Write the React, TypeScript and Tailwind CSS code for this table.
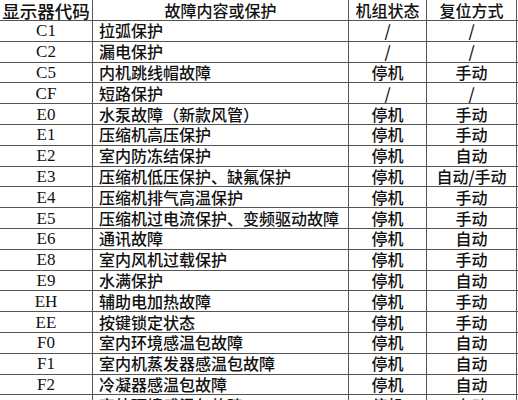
import React from 'react';

type Row = { code: string; desc: string; state: string; reset: string };

const rows: Row[] = [
  { code: 'C1', desc: '拉弧保护', state: '/', reset: '/' },
  { code: 'C2', desc: '漏电保护', state: '/', reset: '/' },
  { code: 'C5', desc: '内机跳线帽故障', state: '停机', reset: '手动' },
  { code: 'CF', desc: '短路保护', state: '/', reset: '/' },
  { code: 'E0', desc: '水泵故障（新款风管）', state: '停机', reset: '手动' },
  { code: 'E1', desc: '压缩机高压保护', state: '停机', reset: '手动' },
  { code: 'E2', desc: '室内防冻结保护', state: '停机', reset: '自动' },
  { code: 'E3', desc: '压缩机低压保护、缺氟保护', state: '停机', reset: '自动/手动' },
  { code: 'E4', desc: '压缩机排气高温保护', state: '停机', reset: '手动' },
  { code: 'E5', desc: '压缩机过电流保护、变频驱动故障', state: '停机', reset: '手动' },
  { code: 'E6', desc: '通讯故障', state: '停机', reset: '自动' },
  { code: 'E8', desc: '室内风机过载保护', state: '停机', reset: '手动' },
  { code: 'E9', desc: '水满保护', state: '停机', reset: '自动' },
  { code: 'EH', desc: '辅助电加热故障', state: '停机', reset: '手动' },
  { code: 'EE', desc: '按键锁定状态', state: '停机', reset: '手动' },
  { code: 'F0', desc: '室内环境感温包故障', state: '停机', reset: '自动' },
  { code: 'F1', desc: '室内机蒸发器感温包故障', state: '停机', reset: '自动' },
  { code: 'F2', desc: '冷凝器感温包故障', state: '停机', reset: '自动' },
  { code: 'F3', desc: '室外环境感温包故障', state: '停机', reset: '自动' },
];

const cjk = { fontFamily: '"Noto Sans CJK SC", "Noto Sans", sans-serif' };
const code = { fontFamily: '"Liberation Serif", "Noto Sans CJK SC", serif' };

// column borders at x = 92, 348, 426, 516
const grid = 'grid grid-cols-[93px_256px_78px_90px] border-b border-[#555]';
const cell = 'flex items-center border-r border-[#555] whitespace-nowrap leading-[19px]';

export default function App() {
  return (
    <div className="w-[518px] h-[400px] overflow-hidden bg-white text-[#111] font-medium" style={cjk}>
      <div className={`${grid} h-[21px]`}>
        <div className={`${cell} justify-center text-[17.5px]`}>显示器代码</div>
        <div className={`${cell} justify-center text-[16px]`}>故障内容或保护</div>
        <div className={`${cell} justify-center text-[16px]`}>机组状态</div>
        <div className={`${cell} justify-center text-[16px]`}>复位方式</div>
      </div>
      {rows.map((r) => (
        <div key={r.code} className={`${grid} h-[20.8px]`}>
          <div className={`${cell} justify-center text-[17px]`} style={code}>
            {r.code}
          </div>
          <div className={`${cell} pl-[6px] text-[16px]`}>{r.desc}</div>
          <div className={`${cell} justify-center text-[16px]`}>{r.state}</div>
          <div className={`${cell} justify-center text-[16px]`}>{r.reset}</div>
        </div>
      ))}
    </div>
  );
}
